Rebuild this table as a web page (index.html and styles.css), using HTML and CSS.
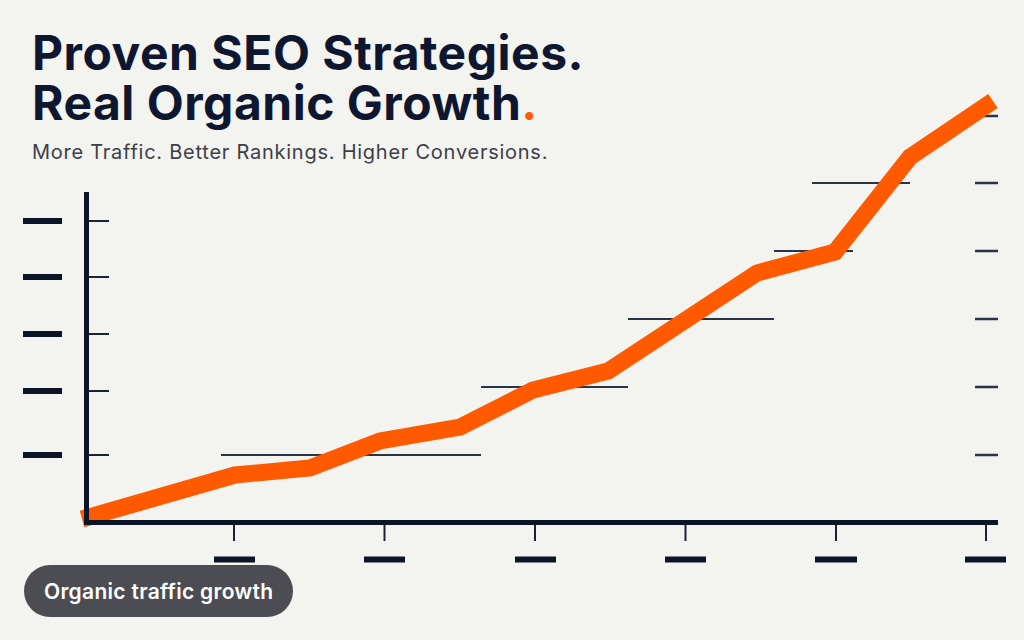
FILE: index.html
```html
<!DOCTYPE html>
<html lang="en">
<head>
<meta charset="utf-8">
<title>Proven SEO Strategies</title>
<link rel="stylesheet" href="styles.css">
</head>
<body>
<main class="page">
  <header class="hero">
    <h1 class="headline">Proven SEO Strategies.<br>Real Organic Growth<span class="dot">.</span></h1>
    <p class="tagline">More Traffic. Better Rankings. Higher Conversions.</p>
  </header>

  <svg class="chart" viewBox="0 180 1024 383" width="1024" height="383" overflow="visible" aria-label="Organic traffic chart">
    <!-- y-axis labels (placeholder dashes) -->
    <g class="label-dash">
      <line x1="23" y1="221" x2="62" y2="221"/>
      <line x1="23" y1="277" x2="62" y2="277"/>
      <line x1="23" y1="334" x2="62" y2="334"/>
      <line x1="23" y1="391" x2="62" y2="391"/>
      <line x1="23" y1="455" x2="62" y2="455"/>
    </g>
    <!-- y ticks -->
    <g class="tick">
      <line x1="88" y1="221" x2="109" y2="221"/>
      <line x1="88" y1="277" x2="109" y2="277"/>
      <line x1="88" y1="334" x2="109" y2="334"/>
      <line x1="88" y1="391" x2="109" y2="391"/>
      <line x1="88" y1="455" x2="109" y2="455"/>
    </g>
    <!-- step grid lines -->
    <g class="grid">
      <line x1="221" y1="455" x2="481" y2="455"/>
      <line x1="481" y1="387" x2="628" y2="387"/>
      <line x1="628" y1="319" x2="774" y2="319"/>
      <line x1="774" y1="251" x2="853" y2="251"/>
      <line x1="812" y1="183" x2="910" y2="183"/>
    </g>
    <!-- right dashes -->
    <g class="rdash">
      <line x1="975" y1="116" x2="998" y2="116"/>
      <line x1="975" y1="183" x2="998" y2="183"/>
      <line x1="975" y1="251" x2="998" y2="251"/>
      <line x1="975" y1="319" x2="998" y2="319"/>
      <line x1="975" y1="387" x2="998" y2="387"/>
      <line x1="975" y1="455" x2="998" y2="455"/>
    </g>
    <!-- growth line -->
    <polyline class="growth" points="82,519 235,475 310,468 380,441 460,427 533,390 608,371 757,273 835,252 910,157 993,101"/>
    <!-- axes -->
    <rect class="axis" x="84" y="192" width="5" height="333"/>
    <rect class="axis" x="84" y="520" width="914" height="5"/>
    <!-- x ticks -->
    <g class="tick">
      <line x1="234" y1="525" x2="234" y2="541"/>
      <line x1="384.5" y1="525" x2="384.5" y2="541"/>
      <line x1="535" y1="525" x2="535" y2="541"/>
      <line x1="685.5" y1="525" x2="685.5" y2="541"/>
      <line x1="836" y1="525" x2="836" y2="541"/>
      <line x1="986" y1="525" x2="986" y2="541"/>
    </g>
    <!-- x labels (placeholder dashes) -->
    <g class="label-dash">
      <line x1="214" y1="559.5" x2="255" y2="559.5"/>
      <line x1="364" y1="559.5" x2="405" y2="559.5"/>
      <line x1="515" y1="559.5" x2="556" y2="559.5"/>
      <line x1="665" y1="559.5" x2="706" y2="559.5"/>
      <line x1="815" y1="559.5" x2="857" y2="559.5"/>
      <line x1="965" y1="559.5" x2="1006" y2="559.5"/>
    </g>
  </svg>

  <div class="caption">
    <span class="pill">Organic traffic growth</span>
  </div>
</main>
</body>
</html>
```

FILE: styles.css
```css
* {
  box-sizing: border-box;
}

html,
body {
  margin: 0;
  padding: 0;
  background: #f3f3f0;
}

.page {
  width: 1024px;
  height: 640px;
  overflow: hidden;
  background: #f3f3f0;
  font-family: Inter, "Noto Sans", "Liberation Sans", sans-serif;
}

.hero {
  padding: 27.5px 0 0 32px;
}

.headline {
  margin: 0;
  font-size: 48px;
  line-height: 50px;
  font-weight: 700;
  letter-spacing: 0.5px;
  color: #0e1630;
}

.dot {
  color: #ff5a0a;
}

.tagline {
  margin: 12.5px 0 0;
  font-size: 20px;
  line-height: 24px;
  font-weight: 400;
  letter-spacing: 0.75px;
  color: #3c3f47;
}

.chart {
  display: block;
  margin-top: 16px;
  overflow: visible;
}

.label-dash line {
  stroke: #0c1428;
  stroke-width: 6;
}

.tick line {
  stroke: #1a2236;
  stroke-width: 2;
}

.grid line {
  stroke: #2b3346;
  stroke-width: 2;
}

.rdash line {
  stroke: #2b3346;
  stroke-width: 2.5;
}

.growth {
  fill: none;
  stroke: #ff5a00;
  stroke-width: 17;
  stroke-linejoin: miter;
  stroke-linecap: butt;
}

.axis {
  fill: #0c1428;
}

.caption {
  padding: 2px 0 0 24px;
}

.pill {
  display: inline-flex;
  align-items: center;
  height: 52px;
  padding: 0 20px;
  border-radius: 26px;
  background: #4b4d53;
  color: #ffffff;
  font-size: 21px;
  font-weight: 600;
  letter-spacing: 0.3px;
  white-space: nowrap;
}
```
